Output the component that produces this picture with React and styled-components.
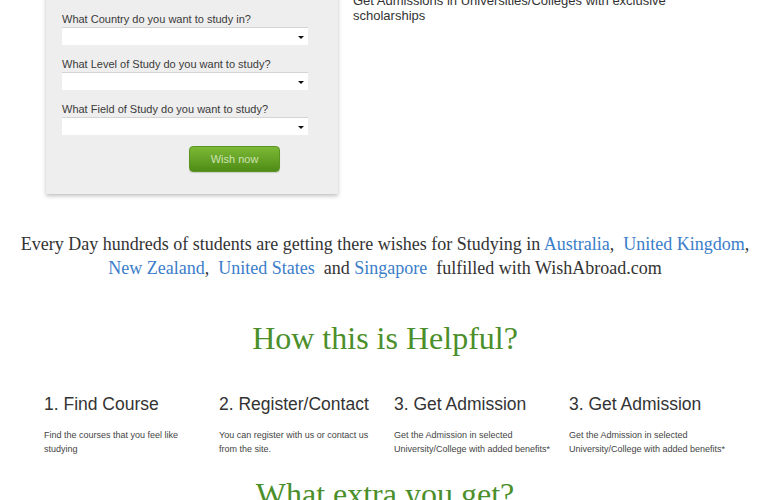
import React from "react";
import styled, { createGlobalStyle } from "styled-components";

const GlobalStyle = createGlobalStyle`
  body {
    margin: 0;
    background: #fff;
    font-family: "Liberation Sans", Arial, sans-serif;
    overflow: hidden;
  }
`;

const fields = [
  "What Course do you want to study?",
  "What Country do you want to study in?",
  "What Level of Study do you want to study?",
  "What Field of Study do you want to study?",
];

const steps = [
  { title: "1. Find Course", text: "Find the courses that you feel like studying" },
  { title: "2. Register/Contact", text: "You can register with us or contact us from the site." },
  { title: "3. Get Admission", text: "Get the Admission in selected University/College with added benefits*" },
  { title: "3. Get Admission", text: "Get the Admission in selected University/College with added benefits*" },
];

const App = () => {
  return (
    <>
      <GlobalStyle />
      <Page>
        <Hero>
          <WishPanel>
            {fields.map((f, i) => (
              <Field key={i}>
                <Label>{f}</Label>
                <SelectBox />
              </Field>
            ))}
            <WishButton>Wish now</WishButton>
          </WishPanel>
          <HeroText>
            <p>Why WishAbroad?</p>
            <p>Get Admissions in Universities/Colleges with exclusive scholarships</p>
          </HeroText>
        </Hero>

        <Intro>
          Every Day hundreds of students are getting there wishes for Studying in{" "}
          <A>Australia</A>,&nbsp; <A>United Kingdom</A>,<br />
          <A>New Zealand</A>,&nbsp; <A>United States</A>&nbsp; and <A>Singapore</A>&nbsp; fulfilled with WishAbroad.com
        </Intro>

        <SectionTitle>How this is Helpful?</SectionTitle>

        <Steps>
          {steps.map((s, i) => (
            <Step key={i}>
              <StepTitle>{s.title}</StepTitle>
              <StepText>{s.text}</StepText>
            </Step>
          ))}
        </Steps>

        <SectionTitle $small>What extra you get?</SectionTitle>
      </Page>
    </>
  );
};

const Page = styled.div`
  width: 770px;
  margin-top: -52px;
`;

const Hero = styled.div`
  display: flex;
  align-items: flex-start;
  padding-left: 46px;
  gap: 15px;
`;

const WishPanel = styled.div`
  width: 246px;
  padding: 20px 30px 22px 16px;
  background: #eeeeee;
  box-shadow: 0 2px 4px rgba(0, 0, 0, 0.25);
  display: flex;
  flex-direction: column;
`;

const Field = styled.div`
  display: flex;
  flex-direction: column;
  margin-bottom: 13px;
  &:last-of-type {
    margin-bottom: 11px;
  }
`;

const Label = styled.label`
  font-size: 11px;
  color: #3a3a3a;
  line-height: 13px;
  margin-bottom: 1px;
`;

const SelectBox = styled.div`
  position: relative;
  height: 17px;
  background: #fff;
  border-top: 1px solid #d4d4d4;
  &::after {
    content: "";
    position: absolute;
    right: 4px;
    top: 8px;
    border-left: 3px solid transparent;
    border-right: 3px solid transparent;
    border-top: 3px solid #111;
  }
`;

const WishButton = styled.button`
  align-self: flex-start;
  margin-left: 127px;
  width: 91px;
  height: 26px;
  border: 1px solid #5b9420;
  border-radius: 4px;
  background: linear-gradient(#7cb936, #4f8c16);
  color: #cde3b2;
  font-family: "Liberation Sans", Arial, sans-serif;
  font-size: 11px;
  padding: 0;
  box-shadow: 0 1px 1px rgba(0, 0, 0, 0.15);
`;

const HeroText = styled.div`
  padding-top: 26px;
  font-size: 13px;
  line-height: 15px;
  color: #333;
  width: 330px;
  p {
    margin: 0 0 4px;
  }
`;

const Intro = styled.p`
  margin: 38px 0 0;
  text-align: center;
  font-family: "Liberation Serif", "Times New Roman", serif;
  font-size: 18px;
  line-height: 24px;
  color: #333;
`;

const A = styled.span`
  color: #3a7dc9;
`;

const SectionTitle = styled.h2`
  margin: ${(p) => (p.$small ? "18px 0 0" : "38px 0 0")};
  text-align: center;
  font-family: "Liberation Serif", "Times New Roman", serif;
  font-weight: normal;
  font-size: 32px;
  line-height: 40px;
  color: #4b8f2b;
`;

const Steps = styled.div`
  display: grid;
  grid-template-columns: repeat(4, 175px);
  padding: 0 0 0 44px;
  margin-top: 35px;
`;

const Step = styled.div`
  display: flex;
  flex-direction: column;
`;

const StepTitle = styled.h3`
  margin: 0;
  font-size: 17.5px;
  font-weight: normal;
  line-height: 22px;
  color: #333;
`;

const StepText = styled.p`
  margin: 13px 0 0;
  font-size: 9px;
  line-height: 14px;
  color: #444;
  width: 158px;
`;

export default App;
